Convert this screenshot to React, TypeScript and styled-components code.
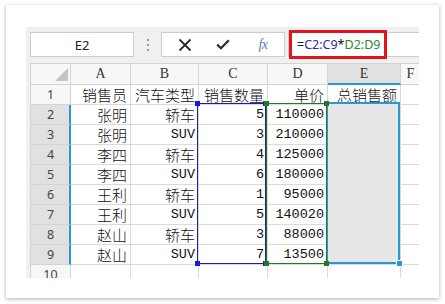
import React from "react";
import styled, { createGlobalStyle } from "styled-components";

const GlobalStyle = createGlobalStyle`
  html, body { margin: 0; padding: 0; background: #ffffff; }
  * { box-sizing: border-box; }
`;

const Page = styled.div`
  padding: 5px 0 0 6px;
  width: 445px;
  height: 304px;
`;

const Card = styled.div`
  width: 433px;
  height: 293px;
  background: #ffffff;
  box-shadow: 0 1px 4px rgba(0, 0, 0, 0.32);
  padding: 22px 20px 0 20px;
`;

const Workspace = styled.div`
  width: 393px;
  height: 251px;
  background: #f0f0f0;
  overflow: hidden;
  padding: 5px 0 0 4px;
  display: flex;
  flex-direction: column;
`;

const FormulaRow = styled.div`
  display: flex;
  height: 25px;
  flex: none;
`;

const NameBox = styled.div`
  width: 104px;
  background: #fff;
  border: 1px solid #cdcdcd;
  display: flex;
  align-items: center;
  justify-content: center;
  font-family: "Noto Sans", "Open Sans", sans-serif;
  font-size: 13px;
  color: #222;
`;

const DotsHandle = styled.div`
  width: 27px;
  display: flex;
  flex-direction: column;
  align-items: center;
  justify-content: center;
  gap: 3px;
`;

const Dot = styled.span`
  width: 2px;
  height: 2px;
  background: #9a9a9a;
`;

const ButtonsBox = styled.div`
  width: 124px;
  background: #fff;
  border: 1px solid #cdcdcd;
  display: grid;
  grid-template-columns: 46px 30px 46px;
  align-items: center;
  justify-items: center;
`;

const Fx = styled.span`
  font-family: "Liberation Serif", "DejaVu Serif", serif;
  font-style: italic;
  font-size: 14px;
  color: #5b7db8;
  letter-spacing: -0.5px;
  padding-left: 4px;
`;

const FormulaInput = styled.div`
  position: relative;
  flex: 1;
  margin-left: 3px;
  background: #fff;
  border-top: 1px solid #cdcdcd;
  border-bottom: 1px solid #cdcdcd;
  border-left: 1px solid #cdcdcd;
  display: flex;
  align-items: center;
  padding-left: 8px;
  font-family: "Noto Sans", "Open Sans", sans-serif;
  font-size: 12.5px;
  color: #111;
  white-space: nowrap;
`;

const Ref = styled.span<{ $c: string }>`
  color: ${(p) => p.$c};
`;

const RedBox = styled.div`
  position: absolute;
  left: 0px;
  top: -3px;
  width: 98px;
  height: 29px;
  border: 3px solid #e3151b;
  pointer-events: none;
`;

const GridWrap = styled.div`
  position: relative;
  margin-top: 6px;
  width: max-content;
  flex: none;
`;

const Grid = styled.div`
  display: grid;
  grid-template-columns: 40px 60px 68px 69px 60px 73px 20px;
  grid-template-rows: 21px;
  grid-auto-rows: 20px;
  border-top: 1px solid #d4d4d4;
  border-left: 1px solid #d4d4d4;
  background: #fff;
`;

const Corner = styled.div`
  position: relative;
  background: #f7f7f7;
  border-right: 1px solid #d4d4d4;
  border-bottom: 1px solid #d4d4d4;
  &::after {
    content: "";
    position: absolute;
    right: 2px;
    bottom: 3px;
    width: 0;
    height: 0;
    border-left: 13px solid transparent;
    border-bottom: 13px solid #c4c4c4;
  }
`;

const ColHead = styled.div<{ $sel?: boolean }>`
  background: ${(p) => (p.$sel ? "#e1e1e1" : "#f7f7f7")};
  border-right: 1px solid #d4d4d4;
  border-bottom: ${(p) => (p.$sel ? "2px solid #2a96d4" : "1px solid #d4d4d4")};
  display: flex;
  align-items: center;
  justify-content: center;
  font-family: "Liberation Serif", "DejaVu Serif", serif;
  font-size: 14px;
  color: #333;
  padding-bottom: ${(p) => (p.$sel ? "0" : "1px")};
`;

const RowHead = styled.div<{ $sel?: boolean }>`
  background: ${(p) => (p.$sel ? "#e1e1e1" : "#f7f7f7")};
  border-right: ${(p) => (p.$sel ? "2px solid #2a96d4" : "1px solid #d4d4d4")};
  border-bottom: 1px solid #d4d4d4;
  display: flex;
  align-items: center;
  justify-content: center;
  font-family: "Noto Sans", "Open Sans", sans-serif;
  font-size: 12.5px;
  color: #444;
  padding-left: ${(p) => (p.$sel ? "1px" : "0")};
`;

const Cell = styled.div<{ $latin?: boolean }>`
  border-right: 1px solid #dadada;
  border-bottom: 1px solid #dadada;
  display: flex;
  align-items: center;
  justify-content: flex-end;
  padding-right: 3px;
  white-space: nowrap;
  overflow: visible;
  color: #111;
  font-family: ${(p) =>
    p.$latin
      ? `"Liberation Mono", "DejaVu Sans Mono", monospace`
      : `"Noto Sans CJK SC", "Noto Sans", sans-serif`};
  font-size: ${(p) => (p.$latin ? "13.5px" : "15px")};
  font-weight: ${(p) => (p.$latin ? 400 : 300)};
`;

const Range = styled.div<{ $c: string; $w: number; $bg?: string }>`
  position: absolute;
  border: ${(p) => p.$w}px solid ${(p) => p.$c};
  background: ${(p) => p.$bg || "transparent"};
  pointer-events: none;
`;

const Handle = styled.span<{ $c: string; $v: "top" | "bottom"; $h: "left" | "right" }>`
  position: absolute;
  width: 5px;
  height: 5px;
  background: ${(p) => p.$c};
  ${(p) => p.$v}: -3px;
  ${(p) => p.$h}: -3px;
`;

const FillHandle = styled.span`
  position: absolute;
  right: -5px;
  bottom: -5px;
  width: 7px;
  height: 7px;
  background: #2a96d4;
  border: 1px solid #ffffff;
`;

const cols = ["A", "B", "C", "D", "E", "F"];

const rows: string[][] = [
  ["销售员", "汽车类型", "销售数量", "单价", "总销售额", ""],
  ["张明", "轿车", "5", "110000", "", ""],
  ["张明", "SUV", "3", "210000", "", ""],
  ["李四", "轿车", "4", "125000", "", ""],
  ["李四", "SUV", "6", "180000", "", ""],
  ["王利", "轿车", "1", "95000", "", ""],
  ["王利", "SUV", "5", "140020", "", ""],
  ["赵山", "轿车", "3", "88000", "", ""],
  ["赵山", "SUV", "7", "13500", "", ""],
  ["", "", "", "", "", ""],
];

const isLatin = (s: string) => /^[\x00-\x7F]*$/.test(s);

const Corners: React.FC<{ c: string }> = ({ c }) => (
  <>
    <Handle $c={c} $v="top" $h="left" />
    <Handle $c={c} $v="top" $h="right" />
    <Handle $c={c} $v="bottom" $h="left" />
    <Handle $c={c} $v="bottom" $h="right" />
  </>
);

const CrossIcon = () => (
  <svg width="14" height="14" viewBox="0 0 14 14">
    <path d="M1.5 1.5 L12.5 12.5 M12.5 1.5 L1.5 12.5" stroke="#2b2b2b" strokeWidth="1.8" fill="none" />
  </svg>
);

const CheckIcon = () => (
  <svg width="14" height="11" viewBox="0 0 14 11">
    <path d="M1.2 5.6 L5 9.2 L12.8 1.2" stroke="#2b2b2b" strokeWidth="2.2" fill="none" />
  </svg>
);

export default function App() {
  return (
    <>
      <GlobalStyle />
      <Page>
        <Card>
          <Workspace>
            <FormulaRow>
              <NameBox>E2</NameBox>
              <DotsHandle>
                <Dot />
                <Dot />
                <Dot />
              </DotsHandle>
              <ButtonsBox>
                <CrossIcon />
                <CheckIcon />
                <Fx>fx</Fx>
              </ButtonsBox>
              <FormulaInput>
                =<Ref $c="#2a2ab8">C2:C9</Ref>*<Ref $c="#2b8a2b">D2:D9</Ref>
                <RedBox />
              </FormulaInput>
            </FormulaRow>
            <GridWrap>
              <Grid>
                <Corner />
                {cols.map((c) => (
                  <ColHead key={c} $sel={c === "E"}>
                    {c}
                  </ColHead>
                ))}
                {rows.map((r, i) => (
                  <React.Fragment key={i}>
                    <RowHead $sel={i >= 1 && i <= 8}>{i + 1}</RowHead>
                    {r.map((v, j) => (
                      <Cell key={j} $latin={isLatin(v)}>
                        {v}
                      </Cell>
                    ))}
                  </React.Fragment>
                ))}
              </Grid>
              <Range $c="#2a96d4" $w={2} $bg="#e6e6e6" style={{ left: 296, top: 39, width: 74, height: 162 }}>
                <FillHandle />
              </Range>
              <Range $c="#1c1cb0" $w={1} style={{ left: 167, top: 40, width: 69, height: 161 }}>
                <Corners c="#1a1ad6" />
              </Range>
              <Range $c="#217a21" $w={1} style={{ left: 236, top: 40, width: 61, height: 161 }}>
                <Corners c="#1b7d1b" />
              </Range>
            </GridWrap>
          </Workspace>
        </Card>
      </Page>
    </>
  );
}
